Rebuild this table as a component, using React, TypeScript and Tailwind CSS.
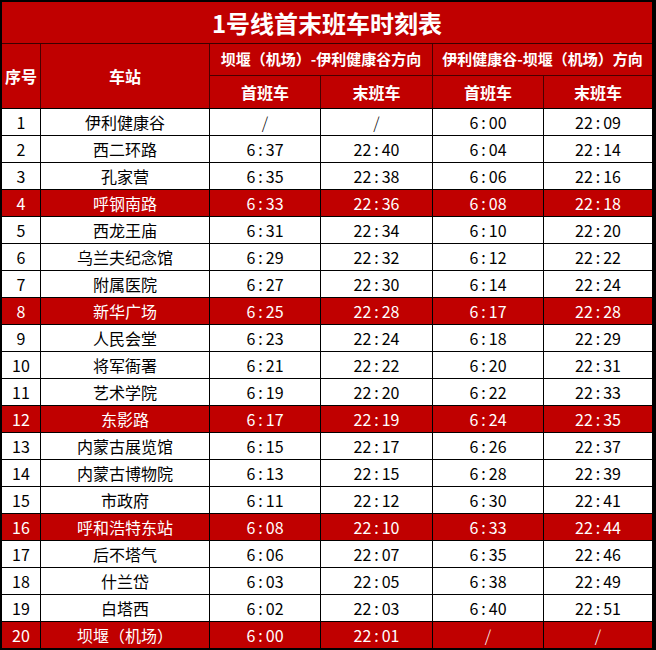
import React from "react";

const rows: [string, string, string, string, string, string, boolean][] = [
  ["1", "伊利健康谷", "/", "/", "6:00", "22:09", false],
  ["2", "西二环路", "6:37", "22:40", "6:04", "22:14", false],
  ["3", "孔家营", "6:35", "22:38", "6:06", "22:16", false],
  ["4", "呼钢南路", "6:33", "22:36", "6:08", "22:18", true],
  ["5", "西龙王庙", "6:31", "22:34", "6:10", "22:20", false],
  ["6", "乌兰夫纪念馆", "6:29", "22:32", "6:12", "22:22", false],
  ["7", "附属医院", "6:27", "22:30", "6:14", "22:24", false],
  ["8", "新华广场", "6:25", "22:28", "6:17", "22:28", true],
  ["9", "人民会堂", "6:23", "22:24", "6:18", "22:29", false],
  ["10", "将军衙署", "6:21", "22:22", "6:20", "22:31", false],
  ["11", "艺术学院", "6:19", "22:20", "6:22", "22:33", false],
  ["12", "东影路", "6:17", "22:19", "6:24", "22:35", true],
  ["13", "内蒙古展览馆", "6:15", "22:17", "6:26", "22:37", false],
  ["14", "内蒙古博物院", "6:13", "22:15", "6:28", "22:39", false],
  ["15", "市政府", "6:11", "22:12", "6:30", "22:41", false],
  ["16", "呼和浩特东站", "6:08", "22:10", "6:33", "22:44", true],
  ["17", "后不塔气", "6:06", "22:07", "6:35", "22:46", false],
  ["18", "什兰岱", "6:03", "22:05", "6:38", "22:49", false],
  ["19", "白塔西", "6:02", "22:03", "6:40", "22:51", false],
  ["20", "坝堰（机场）", "6:00", "22:01", "/", "/", true],
];

function Time({ v }: { v: string }) {
  if (v === "/") return <span className="font-light">/</span>;
  const [a, b] = v.split(":");
  return (
    <span>
      {a}
      <span className="mx-[3px]">:</span>
      {b}
    </span>
  );
}

export default function App() {
  const font = { fontFamily: '"Noto Sans CJK SC", "Noto Sans", sans-serif' };
  const cols = "grid grid-cols-[38px_168px_110px_111px_110px_108px] gap-x-px";
  return (
    <div
      className="w-[656px] h-[650px] bg-black pl-[2px] pt-[2px] pr-[4px] pb-[2px]"
      style={font}
    >
      <div className="flex flex-col w-[650px]">
        <div className="h-[41px] bg-[#c00000] flex items-center justify-center text-white font-bold text-[24px] leading-none">
          1号线首末班车时刻表
        </div>
        <div className="h-px bg-[#3a0000]" />
        <div className={`${cols} gap-y-px bg-[#4a0000] grid-rows-[31px_32px] text-white font-bold`}>
          <div className="row-span-2 bg-[#c00000] flex items-center justify-center text-[16px]">序号</div>
          <div className="row-span-2 bg-[#c00000] flex items-center justify-center text-[16px]">车站</div>
          <div className="col-span-2 bg-[#c00000] flex items-center justify-center text-[15px]">
            坝堰（机场）-伊利健康谷方向
          </div>
          <div className="col-span-2 bg-[#c00000] flex items-center justify-center text-[15px]">
            伊利健康谷-坝堰（机场）方向
          </div>
          <div className="bg-[#c00000] flex items-center justify-center text-[16px]">首班车</div>
          <div className="bg-[#c00000] flex items-center justify-center text-[16px]">末班车</div>
          <div className="bg-[#c00000] flex items-center justify-center text-[16px]">首班车</div>
          <div className="bg-[#c00000] flex items-center justify-center text-[16px]">末班车</div>
        </div>
        <div className="h-px bg-black" />
        <div className="flex flex-col gap-y-px bg-black">
          {rows.map((r) => {
            const cell = r[6]
              ? "bg-[#c00000] text-white"
              : "bg-white text-black";
            return (
              <div key={r[0]} className={`${cols} h-[26px] text-[16px] leading-none`}>
                <div className={`${cell} flex items-center justify-center`}>{r[0]}</div>
                <div className={`${cell} flex items-center justify-center`}>{r[1]}</div>
                <div className={`${cell} flex items-center justify-center`}><Time v={r[2]} /></div>
                <div className={`${cell} flex items-center justify-center`}><Time v={r[3]} /></div>
                <div className={`${cell} flex items-center justify-center`}><Time v={r[4]} /></div>
                <div className={`${cell} flex items-center justify-center`}><Time v={r[5]} /></div>
              </div>
            );
          })}
        </div>
      </div>
    </div>
  );
}
